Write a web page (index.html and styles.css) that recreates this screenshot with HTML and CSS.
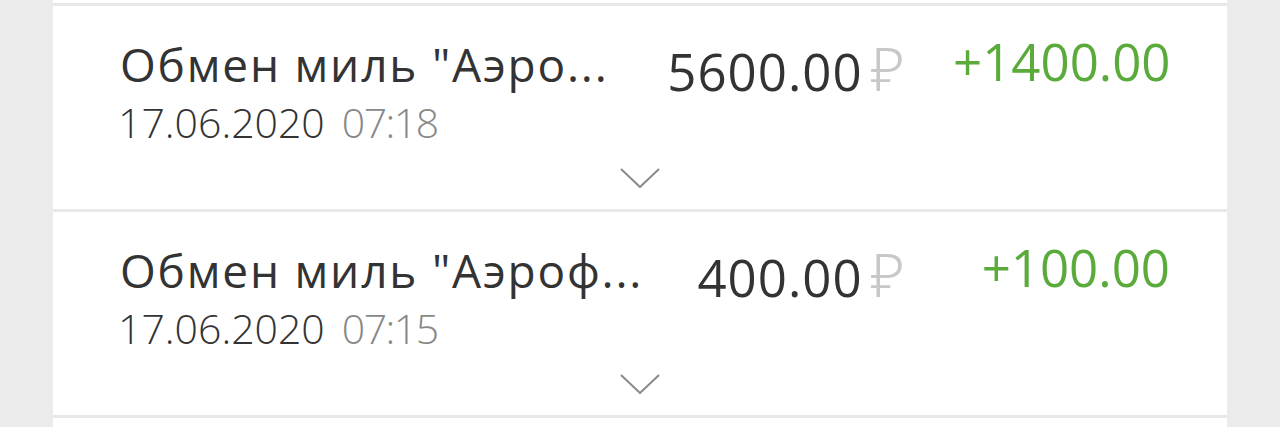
FILE: index.html
```html
<!DOCTYPE html>
<html lang="ru">
<head>
<meta charset="utf-8">
<link rel="stylesheet" href="styles.css">
</head>
<body>
<div class="list">
  <div class="row row-partial"></div>
  <div class="row">
    <div class="main">
      <div class="info">
        <div class="title">Обмен миль "Аэро...</div>
        <div class="date"><span>17.06.2020</span><span class="time">07:18</span></div>
      </div>
      <div class="amount">5600.00<span class="rub">₽</span></div>
      <div class="bonus">+1400.00</div>
    </div>
    <svg class="chev" width="40" height="20" viewBox="0 0 40 20"><path d="M1 1 L20 19 L39 1" fill="none" stroke="#8a8a8a" stroke-width="2"/></svg>
  </div>
  <div class="row">
    <div class="main">
      <div class="info">
        <div class="title">Обмен миль "Аэроф...</div>
        <div class="date"><span>17.06.2020</span><span class="time">07:15</span></div>
      </div>
      <div class="amount">400.00<span class="rub">₽</span></div>
      <div class="bonus">+100.00</div>
    </div>
    <svg class="chev" width="40" height="20" viewBox="0 0 40 20"><path d="M1 1 L20 19 L39 1" fill="none" stroke="#8a8a8a" stroke-width="2"/></svg>
  </div>
  <div class="row row-end"></div>
</div>
</body>
</html>
```

FILE: styles.css
```css
html, body {
  margin: 0;
  padding: 0;
  background: #ebebeb;
  height: 427px;
  overflow: hidden;
}
.list {
  margin: 0 53px;
  display: flex;
  flex-direction: column;
  gap: 3px;
  background: #e8e8e8;
}
.row {
  background: #fff;
  height: 203px;
  flex: 0 0 auto;
  display: flex;
  flex-direction: column;
  align-items: center;
  box-sizing: border-box;
  padding-top: 33px;
}
.row-partial {
  height: 3px;
  padding: 0;
}
.row-end {
  height: 9px;
  padding: 0;
}
.main {
  align-self: stretch;
  display: flex;
  align-items: flex-start;
  padding: 0 57px 0 67px;
}
.info {
  flex: 1 1 auto;
  display: flex;
  flex-direction: column;
}
.title {
  font-family: "Open Sans", "Noto Sans", sans-serif;
  font-size: 46px;
  line-height: 50px;
  letter-spacing: 1.8px;
  color: #333;
  white-space: nowrap;
}
.date {
  font-family: "Open Sans", "Noto Sans", sans-serif;
  font-weight: 300;
  font-size: 41px;
  line-height: 44px;
  color: #333;
  margin-top: 11px;
  margin-left: -2px;
  display: flex;
  gap: 17px;
}
.time {
  color: #888;
  letter-spacing: -1.5px;
}
.amount {
  font-family: "Open Sans", "Noto Sans", sans-serif;
  font-size: 51px;
  line-height: 60px;
  color: #333;
  margin-top: -1px;
  display: flex;
  align-items: baseline;
  letter-spacing: 1px;
}
.rub {
  font-family: "Noto Sans", "DejaVu Sans", sans-serif;
  font-weight: 300;
  color: #c8c8c8;
  font-size: 60px;
  margin-left: 8px;
  letter-spacing: 0;
}
.bonus {
  font-family: "Open Sans", "Noto Sans", sans-serif;
  font-size: 51px;
  line-height: 60px;
  color: #5aab3b;
  margin-left: 48px;
  margin-top: -8px;
  width: 217px;
  text-align: right;
}
.chev {
  margin-top: 24px;
  display: block;
}
```
